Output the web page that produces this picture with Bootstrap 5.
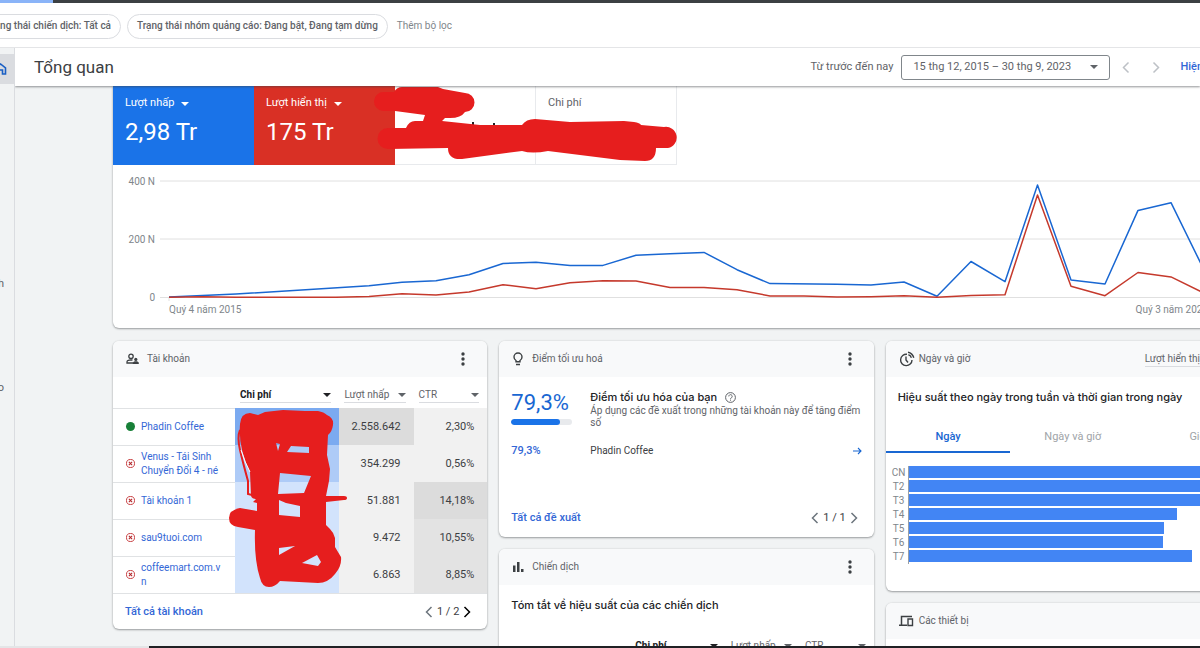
<!DOCTYPE html>
<html lang="vi">
<head>
<meta charset="utf-8">
<meta name="viewport" content="width=device-width, initial-scale=1">
<title>Tổng quan</title>
<link href="https://cdn.jsdelivr.net/npm/bootstrap@5.3.0/dist/css/bootstrap.min.css" rel="stylesheet">
<style>
body{font-family:Roboto,"Noto Sans",sans-serif;font-size:11px;line-height:14px;color:#3c4043;background:#f1f3f4}
button{font:inherit}
a{text-decoration:none;color:#3367d6}
.ic{display:block;flex:none;fill:#3c4043}
.topline{height:3px;background:#3c4043}
.topline div{width:53px;height:3px;background:#8ab4f8}
.filters{height:45px;padding-top:2px;background:#fff;border-bottom:1px solid #e4e5e7;color:#5f6368;flex:none;font-size:10px}
.chip-clip{width:121px;overflow:hidden;flex:none}
.chip{height:25px;padding:0 9px;border:1px solid #dadce0;border-radius:13px;background:#fff;color:#5f6368;font-weight:500;white-space:nowrap;flex:none}
.chip-next{margin:0 9px 0 6px}
.add-filter{border:0;background:none;color:#80868b;padding:0;white-space:nowrap}
.rail{width:15px;border-right:1px solid #dadce0;flex:none;overflow:hidden;position:relative;padding-top:6px}
.rail .home{height:30px;background:#dadce0}
.rail-text{position:absolute;right:10px;white-space:nowrap;color:#5f6368}
.pagehead{height:38px;background:#fff;box-shadow:0 1px 2px rgba(60,64,67,.55);position:relative;z-index:2;flex:none;color:#5f6368;white-space:nowrap;padding-left:19px}
.pagehead h1{font-size:17px;line-height:24px;color:#3c4043;font-weight:400}
.daterange{width:209px;height:25px;border:1px solid #80868b;border-radius:3px;background:#fff;color:#5f6368;padding:0 11px}
.plain{border:0;background:none;padding:0}
.pale{color:#bdc1c6}
.step{margin-left:22px}
.more{margin-right:-3px}
.board{padding-left:98px;margin-right:-60px}
.panel{background:#fff;border-radius:6px;box-shadow:0 1px 2px rgba(60,64,67,.45),0 0 2px rgba(60,64,67,.15);overflow:hidden}
.overview{border-radius:0 0 6px 6px;height:242px;position:relative;margin-bottom:13px}
.kpi{width:141px;height:79px;padding:10px 12px 8px;border:0;border-right:1px solid #e8eaed;border-bottom:1px solid #e8eaed;background:#fff;text-align:left;color:#5f6368;display:flex;flex-direction:column;gap:7px;align-items:flex-start}
.kpi.blue{background:#1a73e8;color:#fff;border-color:#1a73e8}
.kpi.red{background:#d93025;color:#fff;border-color:#d93025}
.kpi strong{font-weight:400;font-size:24px;line-height:30px}
.tri{display:inline-block;border:4px solid transparent;border-top-color:currentColor;border-bottom:0;flex:none}
.ylabels{width:42px;height:128px;font-size:10px;color:#80868b;text-align:right;padding-top:2px}
.ylabels div{height:58px}
.plot{height:128px;width:0;display:block}
.xlabels{font-size:10px;color:#80868b;padding:2px 52px 0 56px}
.scribble{position:absolute;fill:#e61e1e;pointer-events:none}
.tiles{display:grid;grid-template-columns:repeat(3,minmax(0,1fr));gap:12px;align-items:start}
.stack{display:grid;gap:12px}
.tilehead{height:36px;background:#f8f9fa;padding:0 10px 0 13px;color:#5f6368;font-size:10px}
.tilehead h2{font-size:10px;line-height:14px;font-weight:400}
.metric{margin-right:50px;border-bottom:1px solid #dadce0;color:#5f6368;white-space:nowrap}
.tt{font-family:Inter,"Noto Sans",sans-serif;font-size:11px;line-height:14px;font-weight:500;color:#202124}
.lead-in{padding:13px 12px 0}
.accounts{table-layout:fixed;width:100%;border-collapse:collapse}
.accounts th{height:31px;padding:6px 8px 0 5px;font-weight:400;color:#5f6368;font-size:10px;vertical-align:middle}
.accounts th .sortby{width:100%;border:0;border-bottom:1px solid #dadce0;background:none;padding:0;color:inherit;font-weight:inherit;white-space:nowrap}
.accounts th.main{font-weight:700;color:#202124}
.accounts td{height:37px;padding:0 13px 0 0;text-align:right;color:#3c4043}
.accounts td.name{border-top:1px solid #e0e2e4;text-align:left;padding:0 12px 0 13px;font-size:10px;line-height:14px}
.who{display:flex;align-items:center;gap:6px}
.dot{width:9px;height:9px;border-radius:50%;background:#188038;flex:none}
.b1{background:#7baaf0}.b2{background:#aecbf7}.b3{background:#d2e3fc}
.g1{background:#f1f1f1}.g2{background:#e3e3e3}.g3{background:#dcdcdc}
.tilefoot{height:37px;padding:0 12px;border-top:1px solid #e0e2e4;font-weight:500}
.accounts + .scribble + .tilefoot{height:36px}
.score{font-size:22px;line-height:26px;color:#1967d2}
.meter{height:6px;margin-top:3px;border-radius:3px;background:#e8eaed;width:61px}
.meter .progress-bar{background:#1a73e8;border-radius:3px}
.leftcol{width:79px;flex:none}
.note{font-size:10px;line-height:12px;color:#5f6368;padding-top:1px}
.optrow{font-size:10px;padding:0 12px;margin-top:15px}
.optrow .leftcol{font-size:11px}
.opt-foot{margin:41px 0 1px}
.tabrow{height:33px;margin-top:16px}
.tabrow button{flex:1 1 0;border:0;border-bottom:2px solid transparent;background:none;color:#a0a4a8;padding:2px 0 0}
.tabrow button.on{color:#1967d2;border-color:#1967d2;font-weight:500}
.hbars{padding:13px 12px 27px 3px}
.hrow{height:14px;display:flex}
.hrow span{width:19px;text-align:center;color:#80868b;font-size:10px;flex:none;padding-left:1px}
.hrow div{flex:1;height:14px;border-left:1px solid #9aa0a6}
.hrow i{display:block;height:12px;background:#4285f4}
.bottomline{height:2px;background:#202124;flex:none;position:relative;z-index:2}
.bottomline div{width:149px;height:2px;background:#e4e5e7}
</style>
</head>
<body>
<svg width="0" height="0" class="position-absolute" aria-hidden="true">
<symbol id="dots" viewBox="0 0 4 14"><circle cx="2" cy="2" r="1.700"/><circle cx="2" cy="7" r="1.700"/><circle cx="2" cy="12" r="1.700"/></symbol>
<symbol id="prev" viewBox="0 0 8 12"><path d="M6.500 1 1.500 6l5 5" fill="none" stroke="currentColor" stroke-width="1.500"/></symbol>
<symbol id="next" viewBox="0 0 8 12"><path d="M1.500 1l5 5-5 5" fill="none" stroke="currentColor" stroke-width="1.500"/></symbol>
<symbol id="off" viewBox="0.300 0.300 9.400 9.400"><circle cx="5" cy="5" r="4.200" fill="none" stroke="#c5383b"/><path d="M3.300 3.300l3.400 3.400M6.700 3.300L3.300 6.700" stroke="#b3262a" stroke-width="1.100"/></symbol>
</svg>
<div class="vh-100 d-flex flex-column overflow-hidden">
  <div class="topline flex-shrink-0"><div></div></div>
  <div class="filters d-flex align-items-center">
    <div class="chip-clip d-flex justify-content-end"><button class="chip" type="button">Trạng thái chiến dịch: Tất cả</button></div>
    <button class="chip chip-next" type="button">Trạng thái nhóm quảng cáo: Đang bật, Đang tạm dừng</button>
    <button class="add-filter" type="button">Thêm bộ lọc</button>
  </div>
  <div class="d-flex flex-grow-1 overflow-hidden">
    <nav class="rail" aria-label="Điều hướng">
      <a class="home d-flex align-items-center" href="#" aria-label="Tổng quan">
        <svg class="ic" width="7" height="12" viewBox="5 0 7 12"><path d="M0 5.500 5.500 1 10.500 5v6H7.500V7H4" fill="none" stroke="#1a5fc4" stroke-width="1.600"/></svg>
      </a>
      <a class="rail-text" style="top:229px" href="#">h</a>
      <a class="rail-text" style="top:333px" href="#">o</a>
    </nav>
    <div class="flex-grow-1 d-flex flex-column overflow-hidden">
      <header class="pagehead d-flex align-items-center">
        <h1 class="m-0 me-auto">Tổng quan</h1>
        <span class="me-2">Từ trước đến nay</span>
        <button class="daterange d-flex align-items-center justify-content-between" type="button"><span>15 thg 12, 2015 – 30 thg 9, 2023</span><i class="tri"></i></button>
        <button class="plain pale ms-2 ps-1" type="button" aria-label="Trước"><svg class="ic" width="8" height="13"><use href="#prev"/></svg></button>
        <button class="plain pale step" type="button" aria-label="Sau"><svg class="ic" width="8" height="13"><use href="#next"/></svg></button>
        <a class="ms-3 fw-medium ps-1 more" href="#">Hiện</a>
      </header>
      <main class="board">
        <section class="panel overview">
          <div class="d-flex">
            <button class="kpi blue" type="button"><span>Lượt nhấp <i class="tri ms-1"></i></span><strong>2,98 Tr</strong></button>
            <button class="kpi red" type="button"><span>Lượt hiển thị <i class="tri ms-1"></i></span><strong>175 Tr</strong></button>
            <button class="kpi" type="button" aria-label="Chỉ số"></button>
            <button class="kpi" type="button"><span>Chi phí</span></button>
          </div>
          <svg class="scribble" style="left:257px;top:0" width="310" height="78" viewBox="370 86 310 78" aria-hidden="true">
            <path d="M472 122h2v3h-2zM493 123h2v3h-2z" fill="#202124"/>
            <path d="M384 92h10Q397 87 402 87h36l5 2 22 4A9.500 9.500 0 0 1 465 112Q461 118 450 118h-5l-3 3 38 4h42Q526 119 535 119l35 3 54-1 10 1q6 1 7 3l23 2A10 10 0 0 1 668 148h-12Q656 161 645 161l-25-1-72-9q-16 3-26 0l-60 8Q448 160 448 148L388 149A10.500 10.500 0 0 1 388 128h18q3-7 9-7h8l2-6-30-4H383A9.500 9.500 0 0 1 384 92Z"/>
          </svg>
          <div class="d-flex pt-2">
            <div class="ylabels"><div>400 N</div><div>200 N</div><div>0</div></div>
            <svg class="plot flex-grow-1 ms-1" viewBox="159 173 1101 128" preserveAspectRatio="none" role="img" aria-label="Lượt nhấp và lượt hiển thị theo quý">
              <path d="M160 181H1260M160 239H1260M160 297.500H1260M169 297v5" stroke="#e0e0e0" fill="none"/>
              <g fill="none" stroke-width="1.500" stroke-linejoin="round">
              <polyline stroke="#1967d2" points="169,297 236,294 369,285.800 402,282.300 436,280.800 469,274.700 503,263.500 536,262.200 570,265.400 603,265.400 636,255.200 670,253.700 704,252.400 737,269.700 770,283.600 837,284.300 871,284.900 904,282 937,296.300 971,261.500 1005,281.700 1037.500,185 1071,279.900 1105,284 1138,210.400 1171,202.700 1206,274 1239,250"/>
              <polyline stroke="#c5392c" points="169,297.300 202,296.800 236,297.300 336,297.300 369,296.500 402,293.700 436,295 469,291.900 503,284.700 536,288.700 570,282.700 603,280.700 636,281 670,287.500 704,287.500 737,289.700 770,296 804,296 837,297 871,296.700 904,295.700 937,297.200 971,295.500 1005,294.700 1037.500,195 1071,286.200 1105,295.700 1138,272.500 1171,276.900 1206,294 1239,290"/>
              </g>
            </svg>
          </div>
          <div class="xlabels d-flex justify-content-between"><span>Quý 4 năm 2015</span><span>Quý 3 năm 2023</span></div>
        </section>

        <div class="tiles">
          <section class="panel position-relative">
            <div class="tilehead d-flex align-items-center">
              <svg class="ic me-2" width="13" height="12" viewBox="0 0 13 12"><circle cx="5" cy="3.300" r="2.200" fill="none" stroke="#3c4043" stroke-width="1.300"/><path d="M7 10H1V9c0-1.300 2-2.200 4-2.200l1.500.2" fill="none" stroke="#3c4043" stroke-width="1.300"/><circle cx="9.800" cy="6.400" r="1.600"/><path d="M6.800 11v-1c0-1.200 1.500-1.800 3-1.800s3 .6 3 1.800v1z"/></svg>
              <h2 class="m-0 me-auto">Tài khoản</h2>
              <button class="plain me-2 pe-1" type="button" aria-label="Tùy chọn"><svg class="ic" width="4" height="14"><use href="#dots"/></svg></button>
            </div>
            <table class="accounts">
              <colgroup><col style="width:32.600%"><col style="width:27.900%"><col style="width:19.800%"><col style="width:19.700%"></colgroup>
              <thead><tr><th></th>
                <th class="main"><button class="sortby d-flex justify-content-between align-items-center" type="button">Chi phí<i class="tri"></i></button></th>
                <th><button class="sortby d-flex justify-content-between align-items-center" type="button">Lượt nhấp<i class="tri"></i></button></th>
                <th><button class="sortby d-flex justify-content-between align-items-center" type="button">CTR<i class="tri"></i></button></th></tr></thead>
              <tbody>
                <tr><td class="name"><div class="who"><i class="dot"></i><a href="#">Phadin Coffee</a></div></td><td class="b1"></td><td class="g3">2.558.642</td><td class="g1">2,30%</td></tr>
                <tr><td class="name"><div class="who"><svg class="ic" width="9" height="9"><use href="#off"/></svg><a href="#">Venus - Tái Sinh Chuyển Đổi 4 - né</a></div></td><td class="b2"></td><td class="g1">354.299</td><td class="g1">0,56%</td></tr>
                <tr><td class="name"><div class="who"><svg class="ic" width="9" height="9"><use href="#off"/></svg><a href="#">Tài khoản 1</a></div></td><td class="b3"></td><td class="g1">51.881</td><td class="g3">14,18%</td></tr>
                <tr><td class="name"><div class="who"><svg class="ic" width="9" height="9"><use href="#off"/></svg><a href="#">sau9tuoi.com</a></div></td><td class="b3"></td><td class="g1">9.472</td><td class="g2">10,55%</td></tr>
                <tr><td class="name"><div class="who"><svg class="ic" width="9" height="9"><use href="#off"/></svg><a href="#">coffeemart.com.v<wbr>n</a></div></td><td class="b3"></td><td class="g1">6.863</td><td class="g2">8,85%</td></tr>
              </tbody>
            </table>
            <svg class="scribble" style="left:113px;top:67px" width="124" height="182" viewBox="226 408 124 182" aria-hidden="true">
              <path fill-rule="evenodd" d="M240 424Q241 413 250 413L258 415L265 412L283 410L305 411H318Q324 412 327 415Q334 418 333 425T328 435L327 455L330 469L329 481L326 496H344Q347 496 347 498T344 500L326 502V525L330 529Q334 533 335 538L335 547L341 557Q342 566 335 574Q328 583 318 583L280 581Q275 587 269 587Q262 587 260 578Q254 560 255 530L238 527Q229 526 229 518T240 508L257 511V503L253 502L256 499Q252 499 251 496L250 472Q238 448 240 424ZM276 443l4 1-2 7zM291 446l18 1v6l-22-1zM280 473l31 3-7 17-26 1zM279 500l7 3 14 3v11l-21-2zM279 548l16-2-16 9zM302 563l15-8 4 7-3 4z"/>
              <path d="M240 430q-3 7 0 20t8 31v13l8 2" fill="none" stroke="#e61e1e" stroke-width="2"/>
              <path d="M241 450q4 13 9 22" fill="none" stroke="#fff" stroke-width="1"/>
            </svg>
            <div class="tilefoot d-flex align-items-center">
              <a class="me-auto" href="#">Tất cả tài khoản</a>
              <button class="plain" type="button" aria-label="Trang trước"><svg class="ic text-secondary" width="8" height="12"><use href="#prev"/></svg></button>
              <span class="fw-normal mx-1">1 / 2</span>
              <button class="plain me-1" type="button" aria-label="Trang sau"><svg class="ic" width="8" height="12"><use href="#next"/></svg></button>
            </div>
          </section>

          <div class="stack">
            <section class="panel">
              <div class="tilehead d-flex align-items-center">
                <svg class="ic me-2" width="12" height="14" viewBox="0 0 12 14"><path d="M4 9.800V8.500C2.300 7.500 2 6.200 2 5a4 4 0 0 1 8 0c0 1.200-.3 2.500-2 3.500v1.300zM4 12.500h4" fill="none" stroke="#3c4043" stroke-width="1.400"/></svg>
                <h2 class="m-0 me-auto">Điểm tối ưu hoá</h2>
                <button class="plain me-2 pe-1" type="button" aria-label="Tùy chọn"><svg class="ic" width="4" height="14"><use href="#dots"/></svg></button>
              </div>
              <div class="d-flex lead-in">
                <div class="leftcol"><div class="score">79,3%</div><div class="meter progress"><div class="progress-bar" style="width:79.300%"></div></div></div>
                <div>
                  <h3 class="tt m-0 d-flex align-items-center gap-2">Điểm tối ưu hóa của bạn <svg class="ic" width="11" height="11" viewBox="0 0 11 11"><circle cx="5.500" cy="5.500" r="4.900" fill="none" stroke="#5f6368"/><path d="M3.800 4.400a1.700 1.700 0 1 1 2.600 1.400q-.9.500-.9 1.200M5.500 7.600v1.100" fill="none" stroke="#5f6368"/></svg></h3>
                  <p class="m-0 note">Áp dụng các đề xuất trong những tài khoản này để tăng điểm số</p>
                </div>
              </div>
              <div class="d-flex align-items-center optrow">
                <a class="leftcol fw-medium" href="#">79,3%</a><span class="me-auto">Phadin Coffee</span>
                <a href="#" aria-label="Mở"><svg class="ic" width="9" height="8" viewBox="0 0 9 8"><path d="M0 4h8M5 1l3 3-3 3" fill="none" stroke="#1967d2" stroke-width="1.100"/></svg></a>
              </div>
              <div class="tilefoot border-0 d-flex align-items-center opt-foot">
                <a class="me-auto" href="#">Tất cả đề xuất</a>
                <button class="plain" type="button" aria-label="Trang trước"><svg class="ic text-secondary" width="8" height="12"><use href="#prev"/></svg></button>
                <span class="fw-normal mx-1">1 / 1</span>
                <button class="plain me-1" type="button" aria-label="Trang sau"><svg class="ic text-secondary" width="8" height="12"><use href="#next"/></svg></button>
              </div>
            </section>
            <section class="panel">
              <div class="tilehead d-flex align-items-center">
                <svg class="ic me-2" width="12" height="12" viewBox="0 0 12 12"><path d="M1 4.500h2.500V11H1zM5 1h2.500v10H5zM9 8h2.500v3H9z"/></svg>
                <h2 class="m-0 me-auto">Chiến dịch</h2>
                <button class="plain me-2 pe-1" type="button" aria-label="Tùy chọn"><svg class="ic" width="4" height="14"><use href="#dots"/></svg></button>
              </div>
              <h3 class="tt m-0 lead-in pb-3">Tóm tắt về hiệu suất của các chiến dịch</h3>
              <table class="accounts">
                <colgroup><col style="width:35%"><col style="width:25.500%"><col style="width:19.800%"><col style="width:19.700%"></colgroup>
                <thead><tr><th></th>
                  <th class="main"><button class="sortby d-flex justify-content-between align-items-center" type="button">Chi phí<i class="tri"></i></button></th>
                  <th><button class="sortby d-flex justify-content-between align-items-center" type="button">Lượt nhấp<i class="tri"></i></button></th>
                  <th><button class="sortby d-flex justify-content-between align-items-center" type="button">CTR<i class="tri"></i></button></th></tr></thead>
              </table>
            </section>
          </div>

          <div class="stack">
            <section class="panel">
              <div class="tilehead d-flex align-items-center">
                <svg class="ic me-1" width="16" height="16" viewBox="0 0 16 16"><path d="M8 3.300A5.700 5.700 0 1 0 13 9M7 5.500V9l2 2.500M9 1.200q4.500.8 5.800 5.600M9.400 3.800q2.200.5 3 2.900" fill="none" stroke="#3c4043" stroke-width="1.400"/></svg>
                <h2 class="m-0 me-auto">Ngày và giờ</h2>
                <button class="border-top-0 border-start-0 border-end-0 bg-transparent p-0 metric" type="button">Lượt hiển thị</button>
              </div>
              <h3 class="tt m-0 lead-in text-nowrap">Hiệu suất theo ngày trong tuần và thời gian trong ngày</h3>
              <div class="tabrow d-flex"><button class="on" type="button">Ngày</button><button type="button">Ngày và giờ</button><button type="button">Giờ</button></div>
              <div class="hbars">
                <div class="hrow"><span>CN</span><div><i style="width:100%"></i></div></div>
                <div class="hrow"><span>T2</span><div><i style="width:98%"></i></div></div>
                <div class="hrow"><span>T3</span><div><i style="width:97%"></i></div></div>
                <div class="hrow"><span>T4</span><div><i style="width:79%"></i></div></div>
                <div class="hrow"><span>T5</span><div><i style="width:75.200%"></i></div></div>
                <div class="hrow"><span>T6</span><div><i style="width:74.900%"></i></div></div>
                <div class="hrow"><span>T7</span><div><i style="width:83.400%"></i></div></div>
              </div>
            </section>
            <section class="panel">
              <div class="tilehead d-flex align-items-center">
                <svg class="ic me-1" width="16" height="12" viewBox="0 0 16 12"><path d="M2.500 9.500V1.500H13M0 10.300h8" fill="none" stroke="#3c4043" stroke-width="1.500"/><path d="M9 4h4.500v6.500H9z" fill="none" stroke="#3c4043" stroke-width="1.400"/></svg>
                <h2 class="m-0 me-auto">Các thiết bị</h2>
              </div>
              <div class="p-4"></div>
            </section>
          </div>
        </div>
      </main>
    </div>
  </div>
  <div class="bottomline"><div></div></div>
</div>
<script src="https://cdn.jsdelivr.net/npm/bootstrap@5.3.0/dist/js/bootstrap.bundle.min.js"></script>
</body>
</html>
